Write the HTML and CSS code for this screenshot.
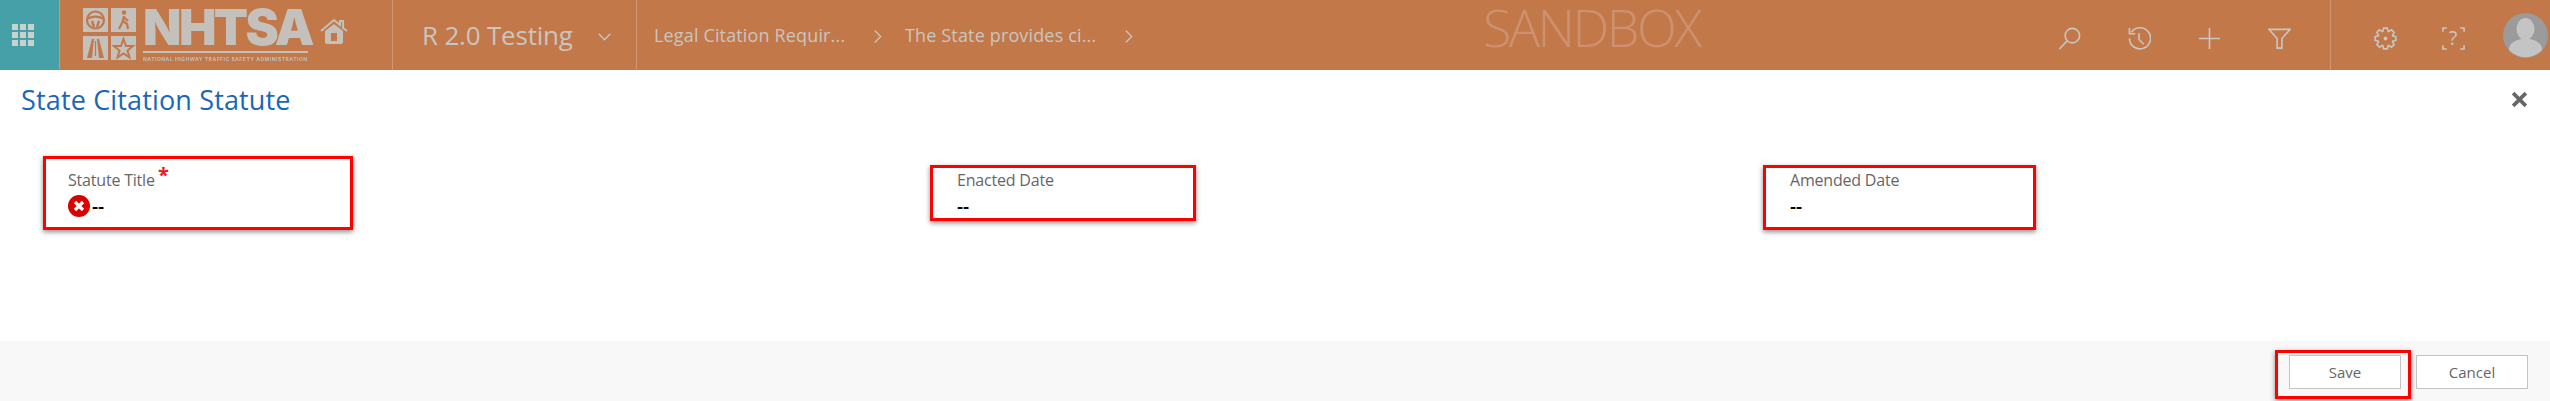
FILE: index.html
```html
<!DOCTYPE html>
<html lang="en">
<head>
<meta charset="utf-8">
<title>State Citation Statute</title>
<link rel="stylesheet" href="styles.css">
</head>
<body>
<header class="topbar">
  <div class="apps">
    <svg class="apps-icon" viewBox="0 0 22 22"><g fill="currentColor"><rect x="0" y="0" width="6" height="6"/><rect x="8" y="0" width="6" height="6"/><rect x="16" y="0" width="6" height="6"/><rect x="0" y="8" width="6" height="6"/><rect x="8" y="8" width="6" height="6"/><rect x="16" y="8" width="6" height="6"/><rect x="0" y="16" width="6" height="6"/><rect x="8" y="16" width="6" height="6"/><rect x="16" y="16" width="6" height="6"/></g></svg>
  </div>
  <div class="brand">
    <svg class="logo-tiles" viewBox="0 0 53 52">
      <rect class="tile" x="0" y="0" width="25" height="24"/>
      <rect class="tile" x="28" y="0" width="25" height="24"/>
      <rect class="tile" x="0" y="28" width="25" height="24"/>
      <rect class="tile" x="28" y="28" width="25" height="24"/>
      <g class="cut">
        <circle cx="12.5" cy="12" r="8.5" fill="none" stroke-width="2.2"/>
        <path d="M5 10.5c5-2.5 10-2.5 15 0M9 13l2 6M16 13l-2 6" fill="none" stroke-width="2.4"/>
        <circle cx="41" cy="4.5" r="2.2" class="cut-fill"/>
        <path d="M41 8l-1.500 6-3.500 7M40 13l4 3 1 5M40.500 9l4.500 4" fill="none" stroke-width="2.2"/>
        <path d="M9 31l-5 19h5l2-19zM16 31l5 19h-5l-2-19z" class="cut-fill"/>
        <path d="M12.500 33v15" fill="none" stroke-width="1.200"/>
        <path d="M40.500 31l2.500 7h7l-5.500 4.500 2 7-6-4-6 4 2-7-5.500-4.500h7z" fill="none" stroke-width="2"/>
      </g>
    </svg>
    <div class="logo-words">
      <div class="logo-name">NHTSA</div>
      <div class="logo-sub">NATIONAL HIGHWAY TRAFFIC SAFETY ADMINISTRATION</div>
    </div>
    <svg class="home" viewBox="0 0 28 26"><path d="M1 13L14 2l6 5V3h3v7l4 3" fill="none" stroke="currentColor" stroke-width="2"/><path fill-rule="evenodd" fill="currentColor" d="M5 13l9-7 9 7v11a2 2 0 0 1-2 2H7a2 2 0 0 1-2-2zM11 15v8h6v-8z"/></svg>
  </div>
  <div class="project">
    <span class="project-name">R 2.0 Testing</span>
    <svg class="project-chev" viewBox="0 0 13 8"><path d="M.7.7l5.800 6 5.800-6" fill="none" stroke="currentColor" stroke-width="1.300"/></svg>
  </div>
  <nav class="crumbs">
    <span class="crumb">Legal Citation Requir...</span>
    <svg class="crumb-chev" viewBox="0 0 8 13"><path d="M.7.500l6 6-6 6" fill="none" stroke="currentColor" stroke-width="1.300"/></svg>
    <span class="crumb">The State provides ci...</span>
    <svg class="crumb-chev" viewBox="0 0 8 13"><path d="M.7.500l6 6-6 6" fill="none" stroke="currentColor" stroke-width="1.300"/></svg>
  </nav>
  <div class="sandbox">SANDBOX</div>
  <div class="tools">
    <span class="tool"><svg class="icon" viewBox="0 0 24 24"><circle cx="15" cy="9" r="7.500"/><path d="M9.500 14.500L1.500 23"/></svg></span>
    <span class="tool"><svg class="icon" viewBox="0 0 24 24"><path d="M3.500 5.500A11 11 0 1 1 1.500 12"/><path d="M1.500 1v6h6M11.500 6.500v6.500l5 5"/></svg></span>
    <span class="tool"><svg class="icon" viewBox="0 0 24 24"><path d="M12 1v22M1 12h22"/></svg></span>
    <span class="tool"><svg class="icon" viewBox="0 0 24 22"><path d="M1 1.500h22l-8.500 9.500v10h-5V11z"/></svg></span>
  </div>
  <div class="aux">
    <span class="aux-slot"><svg class="icon" viewBox="0 0 24 24"><path d="M19.520 9.260L22.830 10.090V13.910L19.520 14.740L19.250 15.380L21.010 18.310L18.310 21.010L15.380 19.250L14.740 19.520L13.910 22.830H10.090L9.260 19.520L8.620 19.250L5.690 21.010L2.990 18.310L4.750 15.380L4.480 14.740L1.170 13.910V10.090L4.480 9.260L4.750 8.620L2.990 5.690L5.690 2.990L8.620 4.750L9.260 4.480L10.090 1.170H13.910L14.740 4.480L15.380 4.750L18.310 2.990L21.010 5.690L19.250 8.620z"/><circle class="dot" cx="12" cy="12" r="2"/></svg></span>
    <span class="aux-slot help"><svg class="icon" viewBox="0 0 24 24"><path d="M5 1H1v4M19 1h4v4M5 23H1v-4M19 23h4v-4"/></svg><span class="help-mark">?</span></span>
    <svg class="avatar" viewBox="0 0 45 45"><circle cx="22.500" cy="22.500" r="22.500" class="avatar-bg"/><ellipse cx="22.500" cy="16" rx="9" ry="11" class="avatar-fg"/><path class="avatar-fg" d="M6 37c0-8 8-10 12-11h9c4 1 12 3 12 11a22.500 22.500 0 0 1-33 0z"/></svg>
  </div>
</header>

<main class="dialog">
  <div class="dialog-head">
    <h1 class="dialog-title">State Citation Statute</h1>
    <svg class="close" viewBox="0 0 16 16"><path d="M2 2l12 12M14 2L2 14" fill="none" stroke="currentColor" stroke-width="3.400"/></svg>
  </div>
  <div class="fields">
    <div class="field">
      <span class="mark mark-title"></span>
      <div class="field-label">Statute Title<span class="req">*</span></div>
      <div class="field-value">
        <svg class="err" viewBox="0 0 22 22"><circle cx="11" cy="11" r="11" fill="#d90000"/><path d="M7 7l8 8M15 7l-8 8" stroke="#fff" stroke-width="3.200" fill="none"/></svg>
        <span>--</span>
      </div>
    </div>
    <div class="field">
      <span class="mark mark-enacted"></span>
      <div class="field-label">Enacted Date</div>
      <div class="field-value"><span>--</span></div>
    </div>
    <div class="field">
      <span class="mark mark-amended"></span>
      <div class="field-label">Amended Date</div>
      <div class="field-value"><span>--</span></div>
    </div>
  </div>
</main>

<footer class="actions">
  <button class="btn save"><span class="mark mark-save"></span>Save</button>
  <button class="btn">Cancel</button>
</footer>
</body>
</html>
```

FILE: styles.css
```css
* { box-sizing: border-box; }
html, body { margin: 0; padding: 0; }
body {
  width: 2550px;
  height: 401px;
  overflow: hidden;
  display: flex;
  flex-direction: column;
  background: #fff;
  font-family: "Open Sans", "Noto Sans", "Liberation Sans", sans-serif;
}

/* top bar */
.topbar {
  height: 70px;
  flex: none;
  display: flex;
  align-items: stretch;
  background: #c27849;
  color: #c4c0bc;
}
.apps {
  width: 60px;
  flex: none;
  background: #46a0a8;
  border-right: 1px solid #d39670;
  display: flex;
  align-items: center;
  padding-left: 12px;
  color: #c9d2cf;
}
.apps-icon { width: 22px; height: 22px; display: block; }

.brand {
  width: 333px;
  flex: none;
  border-right: 1px solid #d39670;
  display: flex;
  align-items: flex-start;
  padding: 8px 0 0 23px;
  filter: blur(0.4px);
}
.logo-tiles { width: 53px; height: 52px; flex: none; display: block; }
.tile { fill: #c4c0bc; }
.cut { stroke: #c27849; }
.cut-fill { fill: #c27849; stroke: none; }
.logo-words { margin-left: 7px; width: 165px; flex: none; }
.logo-name {
  font-family: Inter, "Liberation Sans", sans-serif;
  font-weight: 900;
  font-size: 50px;
  line-height: 38px;
  height: 43px;
  letter-spacing: -2.600px;
  white-space: nowrap;
}
.logo-sub {
  border-top: 2px solid #c4c0bc;
  padding-top: 3px;
  font-family: Inter, "Liberation Sans", sans-serif;
  font-size: 5px;
  line-height: 6px;
  font-weight: 700;
  letter-spacing: 0.520px;
  white-space: nowrap;
}
.home { width: 28px; height: 26px; margin: 10px 0 0 12px; flex: none; display: block; }

.project {
  width: 244px;
  flex: none;
  border-right: 1px solid #d39670;
  display: flex;
  align-items: center;
  padding-left: 29px;
  color: #c9c5c1;
}
.project-name { width: 176px; font-size: 26px; line-height: 34px; white-space: nowrap; letter-spacing: -0.200px; }
.project-chev { width: 13px; height: 8px; display: block; margin-top: 4px; }

.crumbs {
  width: 849px;
  flex: none;
  display: flex;
  align-items: center;
  padding-left: 17px;
  color: #c9c5c1;
}
.crumb { width: 193px; font-size: 18px; letter-spacing: 0.150px; white-space: nowrap; flex: none; }
.crumb-chev { width: 8px; height: 13px; margin: 3px 23px 0 27px; flex: none; display: block; }

.sandbox {
  width: 217px;
  flex: none;
  margin-left: -3px;
  margin-right: 3px;
  font-weight: 300;
  font-size: 52px;
  line-height: 54px;
  letter-spacing: -2.500px;
  color: #cd9170;
  white-space: nowrap;
}

.tools {
  margin-left: auto;
  display: flex;
  align-items: center;
  padding: 6px 16px 0 0;
  border-right: 1px solid #d39670;
}
.tool { width: 70px; display: flex; justify-content: center; }
.icon { width: 23px; height: 23px; display: block; fill: none; stroke: #c9c5c1; stroke-width: 1.700; }
.dot { fill: #c9c5c1; stroke: none; }

.aux { display: flex; align-items: center; padding: 6px 2px 0 0; width: 219px; flex: none; }
.aux-slot { width: 68px; display: flex; justify-content: center; position: relative; }
.aux-slot:first-child { margin-left: 20px; }
.help-mark {
  position: absolute;
  left: 0; right: 0; top: -1px;
  text-align: center;
  font-size: 20px;
  line-height: 24px;
  color: #c9c5c1;
}
.avatar { width: 45px; height: 45px; display: block; margin: -6px 0 0 auto; }
.avatar-bg { fill: #9b9b9b; }
.avatar-fg { fill: #c4c4c4; }

/* dialog */
.dialog { flex: 1; min-height: 0; position: relative; }
.dialog-head {
  height: 59px;
  display: flex;
  align-items: center;
  justify-content: space-between;
  padding: 0 22px 0 21px;
}
.dialog-title {
  margin: 0;
  font-weight: 400;
  font-size: 27px;
  line-height: 40px;
  color: #1a66b8;
  letter-spacing: 0.150px;
}
.close { width: 17px; height: 17px; color: #666; display: block; }

.fields {
  display: grid;
  grid-template-columns: 889px 833px 1fr;
  padding: 40px 0 0 68px;
}
.field { position: relative; }
.field-label {
  font-size: 16px;
  line-height: 22px;
  color: #666;
  letter-spacing: -0.200px;
}
.req {
  position: absolute;
  left: 90px;
  top: -6px;
  color: #f01818;
  font-size: 20px;
  font-weight: 700;
  line-height: 24px;
}
.field-value {
  display: flex;
  align-items: center;
  margin-top: 4px;
  height: 22px;
  font-size: 19px;
  font-weight: 600;
  color: #000;
}
.err { width: 22px; height: 22px; margin-right: 2px; display: block; flex: none; }

/* red annotation boxes over the form */
.mark {
  position: absolute;
  border: 3px solid #f00;
  box-shadow: 0 2px 5px rgba(0, 0, 0, .45);
  pointer-events: none;
}
.mark-title { left: -25px; top: -13px; width: 310px; height: 74px; }
.mark-enacted { left: -27px; top: -4px; width: 266px; height: 56px; }
.mark-amended { left: -27px; top: -4px; width: 273px; height: 65px; }

/* footer */
.actions {
  height: 60px;
  flex: none;
  background: #f8f8f8;
  display: flex;
  justify-content: flex-end;
  gap: 15px;
  padding: 14px 22px 0 0;
}
.btn {
  width: 112px;
  height: 34px;
  background: #fff;
  border: 1px solid #c4c4c4;
  padding: 0;
  font-family: inherit;
  font-size: 15px;
  color: #666;
  position: relative;
}
.mark-save { left: -15px; top: -6px; width: 136px; height: 49px; }
```
